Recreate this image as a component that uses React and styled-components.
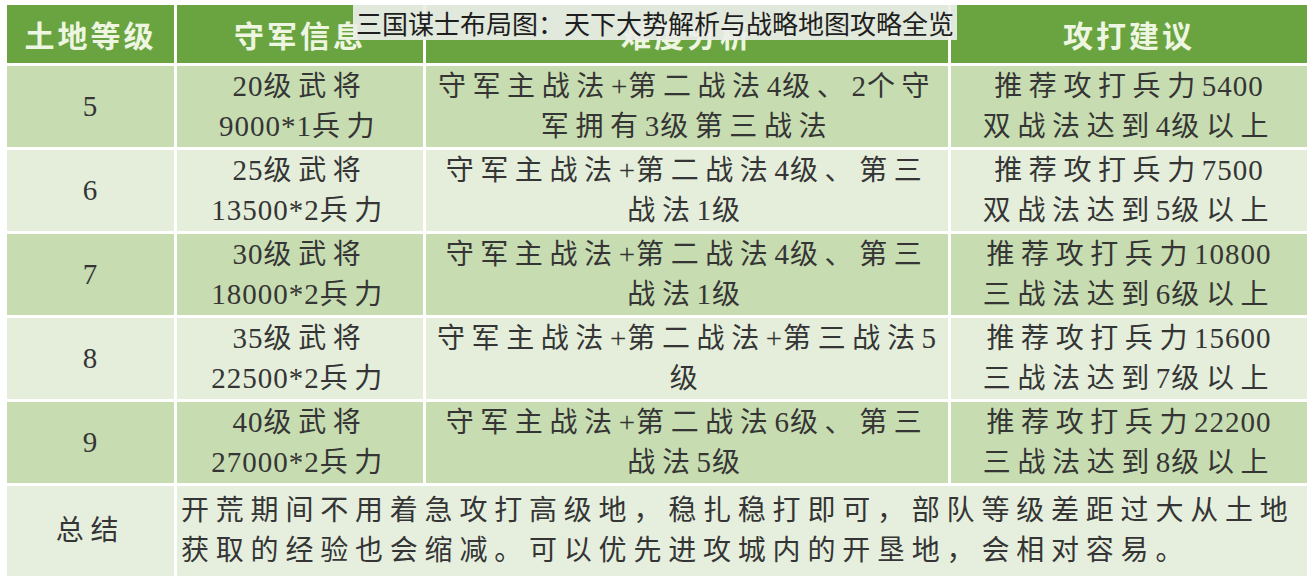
import React from 'react'
import styled, { createGlobalStyle } from 'styled-components'

const GlobalStyle = createGlobalStyle`
	html, body {
		margin: 0;
		padding: 0;
		background: #fff;
	}
`

const Page = styled.div`
	position: relative;
	width: 1311px;
	height: 585px;
	padding: 5px 4px 0 4px;
	box-sizing: border-box;
	background: #fff;
	overflow: hidden;
`

const Table = styled.table`
	width: 1303px;
	table-layout: fixed;
	border-collapse: collapse;
	border-left: 1px solid #a9b0a4;
	font-family: "Liberation Serif", "Noto Sans CJK SC", serif;
	color: #353535;
`

const HeadCell = styled.th`
	height: 58px;
	padding: 0;
	background: #6aa441;
	border: 3px solid #fff;
	border-top: 0;
	color: #eef6e2;
	font-family: "Noto Sans CJK SC", sans-serif;
	font-weight: 700;
	font-size: 30px;
	letter-spacing: 3px;
	text-align: center;
`

const Row = styled.tr`
	background: ${p => (p.$shade ? '#c7dcb0' : '#e4eedb')};
`

const Cell = styled.td`
	height: ${p => p.$h || 81}px;
	padding: 0 4px;
	border: 3px solid #fff;
	font-size: 28px;
	line-height: 40px;
	letter-spacing: ${p => (p.$wide ? 6.8 : 6.6)}px;
	text-align: ${p => (p.$left ? 'left' : 'center')};
	vertical-align: middle;
	white-space: nowrap;
`

const Num = styled.span`
	font-size: 29px;
	line-height: 1;
	letter-spacing: 1px;
`

const SumRow = styled.tr`
	background: #e6efde;
`

const Caption = styled.div`
	position: absolute;
	top: 5px;
	left: 353px;
	width: 604px;
	height: 35px;
	background: rgba(236, 238, 233, 0.92);
	font-family: "Noto Sans CJK SC", sans-serif;
	font-size: 26px;
	line-height: 35px;
	color: #1e1e1e;
	text-align: center;
	white-space: nowrap;
`

const rows = [
	{ lv: '5', army: ['20级武将', '9000*1兵力'], diff: ['守军主战法+第二战法4级、2个守', '军拥有3级第三战法'], tip: ['推荐攻打兵力5400', '双战法达到4级以上'] },
	{ lv: '6', army: ['25级武将', '13500*2兵力'], diff: ['守军主战法+第二战法4级、第三', '战法1级'], tip: ['推荐攻打兵力7500', '双战法达到5级以上'] },
	{ lv: '7', army: ['30级武将', '18000*2兵力'], diff: ['守军主战法+第二战法4级、第三', '战法1级'], tip: ['推荐攻打兵力10800', '三战法达到6级以上'] },
	{ lv: '8', army: ['35级武将', '22500*2兵力'], diff: ['守军主战法+第二战法+第三战法5', '级'], tip: ['推荐攻打兵力15600', '三战法达到7级以上'] },
	{ lv: '9', army: ['40级武将', '27000*2兵力'], diff: ['守军主战法+第二战法6级、第三', '战法5级'], tip: ['推荐攻打兵力22200', '三战法达到8级以上'] },
]

// digits and signs sit tight, the Chinese text is spread out
const Text = ({ children }) =>
	children.split(/([0-9*+]+)/).map((part, i) =>
		i % 2 ? <Num key={i}>{part}</Num> : part
	)

const Lines = ({ items }) => items.map((t, i) => <div key={i}><Text>{t}</Text></div>)

export default function App() {
	return (
		<Page>
			<GlobalStyle />
			<Table>
				<colgroup>
					<col style={{ width: 170 }} />
					<col style={{ width: 249 }} />
					<col style={{ width: 525 }} />
					<col style={{ width: 359 }} />
				</colgroup>
				<thead>
					<tr>
						<HeadCell>土地等级</HeadCell>
						<HeadCell>守军信息</HeadCell>
						<HeadCell>难度分析</HeadCell>
						<HeadCell>攻打建议</HeadCell>
					</tr>
				</thead>
				<tbody>
					{rows.map((r, i) => (
						<Row key={r.lv} $shade={i % 2 === 0}>
							<Cell><Num>{r.lv}</Num></Cell>
							<Cell><Lines items={r.army} /></Cell>
							<Cell><Lines items={r.diff} /></Cell>
							<Cell><Lines items={r.tip} /></Cell>
						</Row>
					))}
					<SumRow>
						<Cell $h={90} $wide>总结</Cell>
						<Cell $h={90} $wide $left colSpan={3}>
							<Lines items={['开荒期间不用着急攻打高级地，稳扎稳打即可，部队等级差距过大从土地', '获取的经验也会缩减。可以优先进攻城内的开垦地，会相对容易。']} />
						</Cell>
					</SumRow>
				</tbody>
			</Table>
			<Caption>三国谋士布局图：天下大势解析与战略地图攻略全览</Caption>
		</Page>
	)
}
